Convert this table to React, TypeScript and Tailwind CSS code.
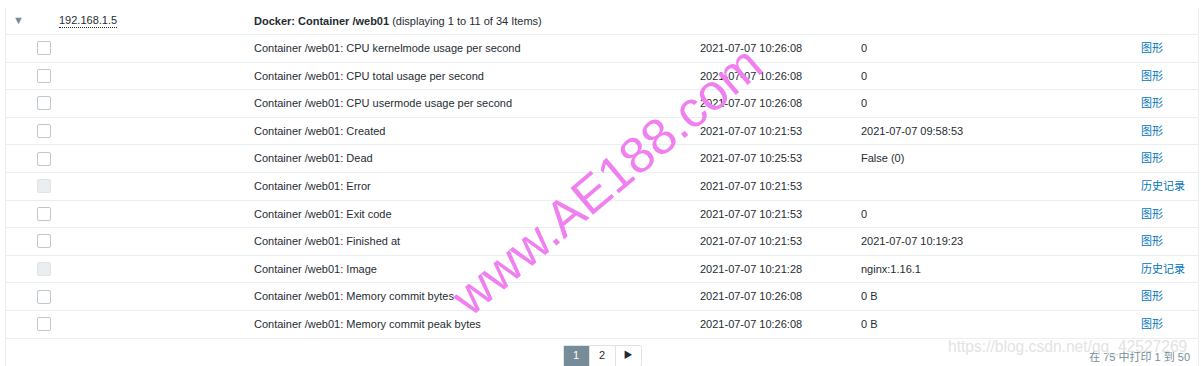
import React from "react"

type Item = {
  name: string
  time: string
  value: string
  disabled?: boolean
  link: string
}

const items: Item[] = [
  { name: "Container /web01: CPU kernelmode usage per second", time: "2021-07-07 10:26:08", value: "0", link: "图形" },
  { name: "Container /web01: CPU total usage per second", time: "2021-07-07 10:26:08", value: "0", link: "图形" },
  { name: "Container /web01: CPU usermode usage per second", time: "2021-07-07 10:26:08", value: "0", link: "图形" },
  { name: "Container /web01: Created", time: "2021-07-07 10:21:53", value: "2021-07-07 09:58:53", link: "图形" },
  { name: "Container /web01: Dead", time: "2021-07-07 10:25:53", value: "False (0)", link: "图形" },
  { name: "Container /web01: Error", time: "2021-07-07 10:21:53", value: "", disabled: true, link: "历史记录" },
  { name: "Container /web01: Exit code", time: "2021-07-07 10:21:53", value: "0", link: "图形" },
  { name: "Container /web01: Finished at", time: "2021-07-07 10:21:53", value: "2021-07-07 10:19:23", link: "图形" },
  { name: "Container /web01: Image", time: "2021-07-07 10:21:28", value: "nginx:1.16.1", disabled: true, link: "历史记录" },
  { name: "Container /web01: Memory commit bytes", time: "2021-07-07 10:26:08", value: "0 B", link: "图形" },
  { name: "Container /web01: Memory commit peak bytes", time: "2021-07-07 10:26:08", value: "0 B", link: "图形" },
]

const cols = "grid grid-cols-[31px_22px_195px_446px_161px_280px_1fr] items-center"

const Checkbox = ({ disabled }: { disabled?: boolean }) => (
  <span
    className={
      "block w-[14px] h-[14px] rounded-[2px] border " +
      (disabled ? "bg-[#ebeef0] border-[#dfe4e7]" : "bg-white border-[#bfc7cc]")
    }
  />
)

const App = () => {
  return (
    <div className="relative w-[1201px] h-[366px] overflow-hidden bg-white text-[11px] text-[#1f2c33] font-['Liberation_Sans','Noto_Sans_CJK_SC',sans-serif]">
      <div className="mt-[8px] ml-[5px] mr-[2px] h-[358px] border-l border-r border-[#ebeef0]">
        {/* host group header */}
        <div className={cols + " h-[27px] border-b border-[#ebeef0]"}>
          <span className="pl-[7px] pb-[2px] text-[#768d99] text-[11px] leading-none">▼</span>
          <span />
          <span className="justify-self-start border-b border-dotted border-[#1f2c33] leading-[13px]">192.168.1.5</span>
          <span className="col-span-4 whitespace-nowrap">
            <b>Docker: Container /web01</b> (displaying 1 to 11 of 34 Items)
          </span>
        </div>

        {items.map((it) => (
          <div key={it.name} className={cols + " h-[27.6px] border-b border-[#ebeef0]"}>
            <span />
            <Checkbox disabled={it.disabled} />
            <span />
            <span className="whitespace-nowrap">{it.name}</span>
            <span>{it.time}</span>
            <span>{it.value}</span>
            <a className="text-[#0275b8] whitespace-nowrap">{it.link}</a>
          </div>
        ))}

        {/* pagination */}
        <div className="relative flex justify-center pt-[6px]">
          <div className="flex h-[22px] border border-[#dfe4e7] rounded-[2px]">
            <span className="w-[25px] flex items-center justify-center bg-[#768d99] text-white">1</span>
            <span className="w-[26px] flex items-center justify-center border-l border-[#dfe4e7]">2</span>
            <span className="w-[26px] flex items-center justify-center border-l border-[#dfe4e7] text-[9px] text-[#1f2c33]">▶</span>
          </div>
          <span className="absolute right-[8px] top-[10px] text-[#768d99] whitespace-nowrap">在 75 中打印 1 到 50</span>
        </div>
      </div>

      {/* watermarks */}
      <span className="pointer-events-none absolute left-[948px] top-[335px] text-[15.6px] text-[#e3e3e3] whitespace-nowrap">
        https://blog.csdn.net/qq_42527269
      </span>
      <span className="pointer-events-none absolute left-[414px] top-[155px] -rotate-[40deg] text-[51px] text-[#f080f0] whitespace-nowrap leading-none">
        www.AE188.com
      </span>
    </div>
  )
}

export default App
